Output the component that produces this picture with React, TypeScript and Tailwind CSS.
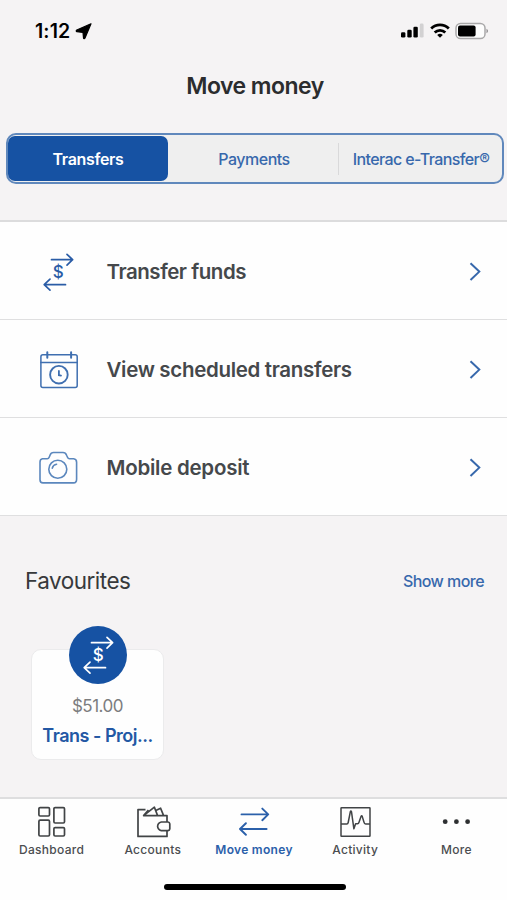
import { useState } from 'react';
import type { ReactNode } from 'react';

const TABS = [
  { label: 'Transfers', className: 'w-[160px] tracking-[-0.35px]' },
  { label: 'Payments', className: 'w-[170px] tracking-[-0.5px] pl-[2px]' },
  { label: 'Interac e-Transfer®', className: 'flex-1 tracking-[-0.6px]' },
];

const StatusIcons = () => (
  <div className="flex items-center">
    <svg width="23" height="16" viewBox="0 0 23 16">
      <rect x="0" y="9.2" width="4.4" height="5.3" rx="1.3" />
      <rect x="6.3" y="6.8" width="4.4" height="7.7" rx="1.3" />
      <rect x="12.4" y="3.8" width="4.4" height="10.7" rx="1.3" />
      <rect x="18.8" y="0.6" width="3.8" height="13.9" rx="1.3" fill="#d2d1d2" />
    </svg>
    <svg width="20" height="16" viewBox="0 0 20 16" className="ml-[6px]" fill="none" stroke="#000" strokeWidth="2.8">
      <path d="M1.2 5.4a12.7 12.7 0 0 1 17.6 0" />
      <path d="M4.7 9.4a7.7 7.7 0 0 1 10.6 0" />
      <path d="M7.2 12a4 4 0 0 1 5.6 0L10 14.8z" fill="#000" stroke="none" />
    </svg>
    <svg width="34" height="18" viewBox="0 0 34 18" className="ml-[5px]">
      <rect x="1" y="1.5" width="29" height="15" rx="4.6" fill="#fdfdfd" stroke="#a9a8a9" strokeWidth="1.5" />
      <rect x="3" y="3.6" width="17.6" height="10.8" rx="2" />
      <path d="M31.5 6.8c2 .8 2 3.6 0 4.4z" fill="#8d8c8d" />
    </svg>
  </div>
);

const TransferIcon = () => (
  <svg width="40" height="40" viewBox="0 0 40 40" fill="none" stroke="currentColor" strokeWidth="1.7" strokeLinecap="round" strokeLinejoin="round">
    <path d="M13.5 7.7H34.5M29 2.3L34.6 7.7L29 13.1" />
    <path d="M27.5 32.7H6.5M12 27.1L6.2 32.7L12 38.1" />
    <text x="20.3" y="26.2" fontSize="17" fontWeight="500" fontFamily="Inter, sans-serif" textAnchor="middle" fill="currentColor" stroke="none">$</text>
  </svg>
);

const CalendarIcon = () => (
  <svg width="40" height="40" viewBox="0 0 40 40" fill="none" stroke="#3f6fb0" strokeWidth="1.5" strokeLinecap="round">
    <rect x="2.9" y="4.7" width="36.3" height="32.8" rx="2" />
    <path d="M2.9 12.4H39.2" />
    <path d="M9.3 2.3V7.7M33.1 2.3V7.7" strokeWidth="2" />
    <circle cx="20.9" cy="24.7" r="8.8" strokeWidth="1.9" />
    <path d="M20.9 21V25.2L23 25.6" strokeWidth="1.8" />
  </svg>
);

const CameraIcon = () => (
  <svg width="40" height="40" viewBox="0 0 40 40" fill="none" stroke="#5b87bd" strokeWidth="1.6" strokeLinejoin="round">
    <path d="M4.5 10.8H9.2Q10.6 10.8 11.2 9.3L12 7.2Q13 4.5 15.5 4.5H25Q27.6 4.5 28.6 7.2L29.5 9.3Q30.1 10.8 31.5 10.8H35.6Q38.6 11.1 38.6 14.3V31.3Q38.6 34.9 35.6 34.9H5Q2 34.9 2 31.8V14Q2 11.1 4.5 10.8Z" />
    <circle cx="19.8" cy="21.2" r="9" />
    <path d="M14.3 20.1Q15 16.7 18.6 16.2" strokeLinecap="round" />
  </svg>
);

const DashboardIcon = () => (
  <svg width="34" height="34" viewBox="0 0 34 34" fill="none" stroke="#414446" strokeWidth="1.7">
    <rect x="3.9" y="1.6" width="10.6" height="8.4" rx="1.2" />
    <rect x="18.9" y="1.6" width="10.6" height="15.4" rx="1.2" />
    <rect x="3.9" y="14.2" width="10.6" height="15.8" rx="1.2" />
    <rect x="18.9" y="21.6" width="10.6" height="8.4" rx="1.2" />
  </svg>
);

const WalletIcon = () => (
  <svg width="36" height="34" viewBox="0 0 36 34" fill="none" stroke="#414446" strokeWidth="1.7" strokeLinejoin="round">
    <path d="M10.5 3.6H3V30.4H32V24.7M32 16V9.6H8.6L19.4 1.2L22.6 9.6M20.8 4.6L25.6 2.2L28.6 9.6M8.6 9.6L13.4 4" />
    <path d="M26.3 16H33Q34.6 16.2 34.8 17.8V22.8Q34.6 24.5 33 24.7H26.3Q22.8 23.8 22.6 20.3Q22.8 16.8 26.3 16Z" />
  </svg>
);

const MoveIcon = () => (
  <svg width="34" height="34" viewBox="0 0 34 34" fill="none" stroke="currentColor" strokeWidth="1.9" strokeLinecap="round" strokeLinejoin="round">
    <path d="M4.5 8.4H31M25.3 2.6L31.2 8.4L25.3 14.2" />
    <path d="M29.6 23H3.2M8.9 17.2L3 23L8.9 28.8" />
  </svg>
);

const ActivityIcon = () => (
  <svg width="34" height="34" viewBox="0 0 34 34" fill="none" stroke="#414446" strokeWidth="1.5" strokeLinejoin="round">
    <rect x="3" y="1.7" width="29" height="28.6" rx="0.5" />
    <path d="M3 18H8.8Q9.9 18 10.2 16.5L12.3 5.8Q12.9 4 13.5 5.8L15.9 22.8L17.6 17.8H19.5Q20.6 17.8 21.1 16L23 10.6Q23.7 9 24.3 10.6L26 16.2Q26.3 18 27.6 18H32" />
  </svg>
);

const MoreIcon = () => (
  <svg width="34" height="34" viewBox="0 0 34 34" fill="#2d2f31">
    <circle cx="6.2" cy="15.7" r="2.4" />
    <circle cx="17.4" cy="15.7" r="2.4" />
    <circle cx="28.6" cy="15.7" r="2.4" />
  </svg>
);

const ROWS: { label: string; icon: ReactNode; className: string }[] = [
  { label: 'Transfer funds', icon: <TransferIcon />, className: 'tracking-[-0.45px]' },
  { label: 'View scheduled transfers', icon: <CalendarIcon />, className: 'tracking-[-0.32px]' },
  { label: 'Mobile deposit', icon: <CameraIcon />, className: 'tracking-[-0.25px]' },
];

const NAV: { label: string; icon: ReactNode }[] = [
  { label: 'Dashboard', icon: <DashboardIcon /> },
  { label: 'Accounts', icon: <WalletIcon /> },
  { label: 'Move money', icon: <MoveIcon /> },
  { label: 'Activity', icon: <ActivityIcon /> },
  { label: 'More', icon: <MoreIcon /> },
];

export default function App() {
  const [tab, setTab] = useState('Transfers');

  return (
    <div className="w-[507px] h-[900px] flex flex-col overflow-hidden bg-[#f5f3f4] font-['Inter',sans-serif] whitespace-nowrap">
      <header className="h-[133px] shrink-0">
        <div className="h-[62px] flex items-center justify-between pl-[35px] pr-[18px]">
          <div className="flex items-center gap-[5px] pt-px">
            <span className="text-[19.5px] font-semibold tracking-[0.1px] text-black">1:12</span>
            <svg width="17" height="17" viewBox="0 0 17 17" stroke="#000" strokeWidth="1.2" strokeLinejoin="round">
              <path d="M16 .8L1.8 7C1 7.4 1.1 8.6 1.9 8.7L8 9.5L8.5 14.9C8.6 15.8 9.6 15.9 10 15.1Z" />
            </svg>
          </div>
          <StatusIcons />
        </div>
        <h1 className="mt-2 text-center text-[23px] leading-8 font-semibold tracking-[-0.55px] text-[#2b2c2e] pl-[3px]">Move money</h1>
      </header>

      <div className="ml-[6px] mr-[3px] h-[51px] shrink-0 flex items-center rounded-[10px] border-2 border-[#6088bc] bg-[#efefef] py-px">
        {TABS.map((t, i) => (
          <button
            key={t.label}
            onClick={() => setTab(t.label)}
            className={`${t.className} ${
              tab === t.label
                ? 'h-full rounded-[7px] bg-[#1652a3] text-white font-semibold'
                : 'h-8 text-[#3768ac] font-medium'
            } ${i === 2 ? 'border-l border-[#d9d9da] pl-px' : ''} text-[16px]`}
          >
            {t.label}
          </button>
        ))}
      </div>

      <div className="mt-[36px] shrink-0 border-t-2 border-[#dcdcdd] bg-[#fefefe]">
        {ROWS.map(row => (
          <button
            key={row.label}
            className="w-full h-[98px] flex items-center border-b border-[#dfdfe0] pt-[3px] pl-[38px] pr-[26px] text-[#2a5ca6]"
          >
            {row.icon}
            <span className={`${row.className} ml-[28.5px] flex-1 text-left text-[20.5px] font-semibold text-[#45484b]`}>{row.label}</span>
            <svg width="12" height="20" viewBox="0 0 12 20" fill="none" stroke="#3768ac" strokeWidth="2">
              <path d="M1.5 1.2L10.3 9.6L1.5 18" />
            </svg>
          </button>
        ))}
      </div>

      <section className="flex-1">
        <div className="mt-[49px] flex items-center justify-between pl-[25px] pr-[23px]">
          <h2 className="text-[22.5px] leading-8 tracking-[-0.5px] text-[#37393b]">Favourites</h2>
          <a className="text-[16px] font-medium tracking-[-0.55px] text-[#3768ac] -mt-px">Show more</a>
        </div>
        <div className="ml-[31px] mt-[29px] w-[133px] flex flex-col items-center">
          <div className="z-10 size-[58px] rounded-full bg-[#1652a3] text-white flex items-center justify-center">
            <TransferIcon />
          </div>
          <div className="-mt-[35px] w-full h-[111px] rounded-[10px] border border-[#ebebec] bg-[#fefefe] pt-[44px] text-center">
            <p className="text-[17px] leading-6 tracking-[-0.5px] text-[#7c7d7e]">$51.00</p>
            <p className="mt-[6px] text-[18px] leading-6 font-semibold tracking-[-0.5px] text-[#2358a4]">Trans - Proj...</p>
          </div>
        </div>
      </section>

      <nav className="h-[103px] shrink-0 border-t-2 border-[#dededf] bg-[#fefefe]">
        <div className="flex pt-[7px] pl-px">
          {NAV.map(item => (
            <button
              key={item.label}
              className={`flex-1 flex flex-col items-center text-[12px] leading-5 tracking-[0.3px] ${
                item.label === 'Move money' ? 'text-[#2b60aa] font-semibold' : 'text-[#4b4d50] font-medium'
              }`}
            >
              {item.icon}
              {item.label}
            </button>
          ))}
        </div>
        <div className="mx-auto mt-[24px] w-[182px] h-[6px] translate-x-px rounded-full bg-black" />
      </nav>
    </div>
  );
}
